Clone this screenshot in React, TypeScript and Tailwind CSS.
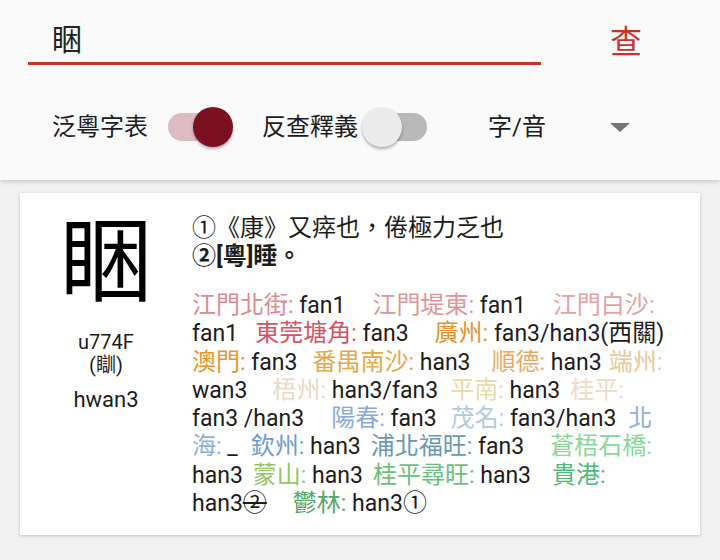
import React from 'react';

type Part = { n?: string; c?: string; colon?: boolean; v?: string; g?: string };

const CJK = /([\u3000-\u303f\u3400-\u9fff\uff00-\uffef\u2460-\u24ff]+)/;

function mixed(text: string) {
  return text.split(CJK).map((chunk, i) =>
    CJK.test(chunk) ? (
      <span key={i} className="text-[24px]">
        {chunk}
      </span>
    ) : (
      chunk
    )
  );
}

const lines: Part[][] = [
  [
    { n: '江門北街', c: 'text-[#de8a90]', colon: true, v: 'fan1' },
    { g: 'w-[27px]', n: '江門堤東', c: 'text-[#e0959b]', colon: true, v: 'fan1' },
    { g: 'w-[27px]', n: '江門白沙', c: 'text-[#e4a2a2]', colon: true },
  ],
  [
    { v: 'fan1' },
    { g: 'w-[17px]', n: '東莞塘角', c: 'text-[#d9505f]', colon: true, v: 'fan3' },
    { g: 'w-[26px]', n: '廣州', c: 'text-[#e6932e]', colon: true, v: 'fan3/han3(西關)' },
  ],
  [
    { n: '澳門', c: 'text-[#e8962a]', colon: true, v: 'fan3' },
    { g: 'w-[15px]', n: '番禺南沙', c: 'text-[#e8a845]', colon: true, v: 'han3' },
    { g: 'w-[21px]', n: '順德', c: 'text-[#e8a86a]', colon: true, v: 'han3' },
    { g: 'w-[7px]', n: '端州', c: 'text-[#ecc79a]', colon: true },
  ],
  [
    { v: 'wan3' },
    { g: 'w-[25px]', n: '梧州', c: 'text-[#eadac4]', colon: true, v: 'han3/fan3' },
    { g: 'w-[12px]', n: '平南', c: 'text-[#e8dba6]', colon: true, v: 'han3' },
    { g: 'w-[10px]', n: '桂平', c: 'text-[#ecdcc8]', colon: true },
  ],
  [
    { v: 'fan3 /han3' },
    { g: 'w-[27px]', n: '陽春', c: 'text-[#8aa8dc]', colon: true, v: 'fan3' },
    { g: 'w-[14px]', n: '茂名', c: 'text-[#b4c8e2]', colon: true, v: 'fan3/han3' },
    { g: 'w-[12px]', n: '北', c: 'text-[#8eb1dc]' },
  ],
  [
    { n: '海', c: 'text-[#8eb1dc]', colon: true, v: '_' },
    { g: 'w-[13px]', n: '欽州', c: 'text-[#6e9ad0]', colon: true, v: 'han3' },
    { g: 'w-[10px]', n: '浦北福旺', c: 'text-[#6a98b0]', colon: true, v: 'fan3' },
    { g: 'w-[26px]', n: '蒼梧石橋', c: 'text-[#8ad89a]', colon: true },
  ],
  [
    { v: 'han3' },
    { g: 'w-[10px]', n: '蒙山', c: 'text-[#94c468]', colon: true, v: 'han3' },
    { g: 'w-[10px]', n: '桂平尋旺', c: 'text-[#6cbf7c]', colon: true, v: 'han3' },
    { g: 'w-[21px]', n: '貴港', c: 'text-[#4cba7a]', colon: true },
  ],
];

function Switch({ on }: { on: boolean }) {
  return (
    <div className="relative w-[70px] h-[40px] shrink-0">
      <div
        className={
          on
            ? 'absolute left-[5px] top-[6px] w-[60px] h-[28px] rounded-full bg-[#dcbcc2]'
            : 'absolute left-[5px] top-[6px] w-[60px] h-[28px] rounded-full bg-[#b9b9b9]'
        }
      />
      <div
        className={
          on
            ? 'absolute left-[30px] top-0 w-10 h-10 rounded-full bg-[#7a1020] shadow-[0_2px_3px_rgba(0,0,0,0.3)]'
            : 'absolute left-0 top-0 w-10 h-10 rounded-full bg-[#ececec] shadow-[0_2px_3px_rgba(0,0,0,0.3)]'
        }
      />
    </div>
  );
}

function DialectLine({ parts }: { parts: Part[] }) {
  return (
    <div className="h-[28.25px] leading-[28.25px] whitespace-nowrap">
      {parts.map((p, i) => (
        <React.Fragment key={i}>
          {p.g && <span className={`inline-block ${p.g}`} />}
          {p.n && (
            <span className={p.c}>
              {mixed(p.n)}
              {p.colon ? ':' : ''}
            </span>
          )}
          {p.v && <span>{p.n ? ' ' : ''}{mixed(p.v)}</span>}
        </React.Fragment>
      ))}
    </div>
  );
}

export default function App() {
  return (
    <div className="min-h-[560px] w-full bg-[#f1f1f1] text-[#1c1c1c] font-[family-name:Roboto,'Noto_Sans_CJK_TC',sans-serif]">
      <header className="relative z-10 h-[180px] bg-[#fafafa] shadow-[0_2px_4px_rgba(0,0,0,0.16)]">
        <div className="flex items-start">
          <div className="ml-[28px] w-[513px] pt-[20px]">
            <div className="pl-[24px] text-[30px] leading-[40px] text-[#222]">睏</div>
            <div className="mt-[2px] h-[3px] bg-[#c8322a]" />
          </div>
          <button className="ml-[69px] pt-[22px] text-[32px] leading-[40px] text-[#c8322a]">查</button>
        </div>
        <div className="mt-[42px] flex items-center h-[40px] text-[24px]">
          <span className="ml-[52px]">泛粵字表</span>
          <div className="ml-[15px]">
            <Switch on />
          </div>
          <span className="ml-[29px]">反查釋義</span>
          <div className="ml-[4px]">
            <Switch on={false} />
          </div>
          <span className="ml-[56px]">字/音</span>
          <span className="ml-[64px] w-0 h-0 border-l-[10px] border-r-[10px] border-t-[9px] border-l-transparent border-r-transparent border-t-[#757575]" />
        </div>
      </header>

      <main className="pt-[13px] px-[20px] pb-[25px]">
        <div className="flex bg-white shadow-[0_1px_3px_rgba(0,0,0,0.2)]">
          <div className="w-[172px] shrink-0 flex flex-col items-center pt-[20px]">
            <div className="text-[92px] leading-[100px] text-black">睏</div>
            <div className="mt-[18px] text-[20px] leading-[23px]">u774F</div>
            <div className="text-[20px] leading-[23px]">(瞓)</div>
            <div className="mt-[10px] text-[22px] leading-[26px]">hwan3</div>
          </div>
          <div className="flex-1 pt-[21px] pb-[18px] text-[23px]">
            <div className="h-[28px] leading-[28px] text-[24px] whitespace-nowrap">①《康》又瘁也，倦極力乏也</div>
            <div className="h-[28px] leading-[28px] text-[24px] font-bold whitespace-nowrap">②[粵]睡。</div>
            <div className="mt-[21px]">
              {lines.map((parts, i) => (
                <DialectLine key={i} parts={parts} />
              ))}
              <div className="h-[28.25px] leading-[28.25px] whitespace-nowrap">
                han3<span className="text-[24px] line-through">②</span>
                <span className="inline-block w-[26px]" />
                <span className="text-[#52a868]">
                  <span className="text-[24px]">鬱林</span>:
                </span>{' '}
                han3<span className="text-[24px]">①</span>
              </div>
            </div>
          </div>
        </div>
      </main>
    </div>
  );
}
